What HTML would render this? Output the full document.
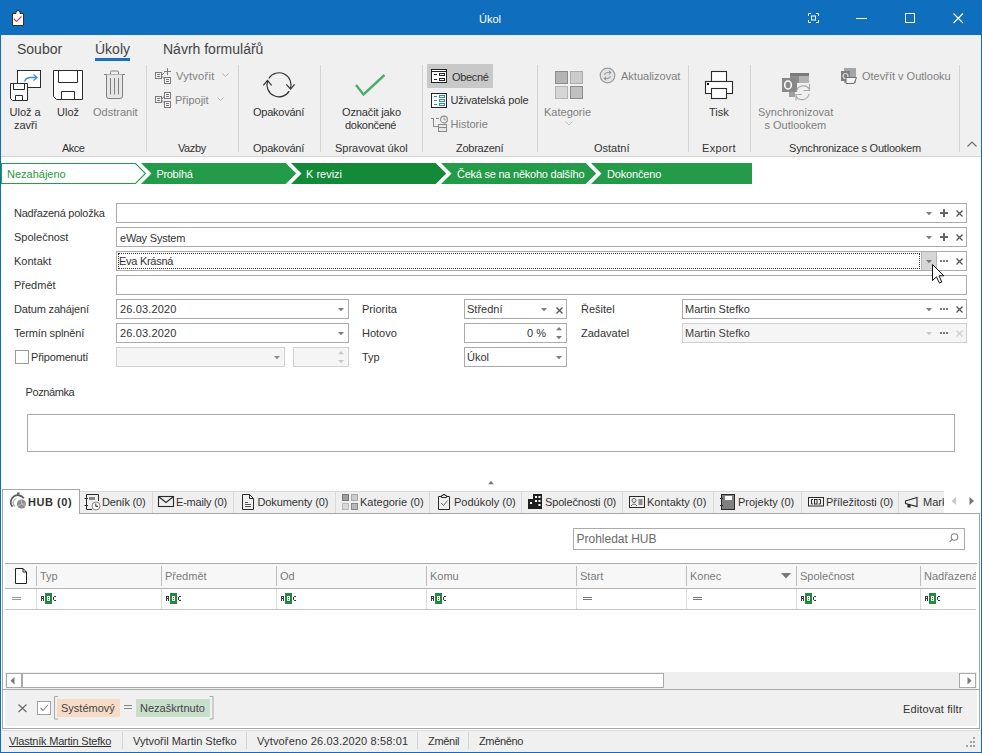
<!DOCTYPE html>
<html><head><meta charset="utf-8">
<style>
*{box-sizing:border-box;margin:0;padding:0}
html,body{width:982px;height:753px;overflow:hidden;background:#fff}
body{position:relative;font-family:"Liberation Sans",sans-serif;color:#333}
.a{position:absolute}
.t{position:absolute;white-space:nowrap;line-height:1}
.f11{font-size:11px}
.f12{font-size:12px}
.f14{font-size:14px}
.gr{color:#7f7f7f}
.vs{position:absolute;width:1px;background:#d4d4d4}
.fld{position:absolute;height:20px;border:1px solid #ababab;background:#fff}
.dis{background:#f5f5f5;border-color:#d0d0d0}
svg{position:absolute;overflow:visible}
</style></head><body>
<!-- window frame -->
<div class="a" style="left:0;top:0;width:982px;height:35px;background:#106ebe"></div>
<div class="a" style="left:0;top:0;width:1px;height:753px;background:#106ebe"></div>
<div class="a" style="left:981px;top:0;width:1px;height:753px;background:#106ebe"></div>
<div class="a" style="left:0;top:752px;width:982px;height:1px;background:#106ebe"></div>

<!-- title -->
<div class="t f11" style="left:479px;top:14px;color:#fff">Úkol</div>

<!-- ribbon -->
<div class="a" style="left:1px;top:35px;width:980px;height:121px;background:#f0f0f0"></div>
<div class="a" style="left:1px;top:156px;width:980px;height:1px;background:#d5d5d5"></div>
<div class="t f14" style="left:17px;top:42px;color:#444">Soubor</div>
<div class="t f14" style="left:95px;top:42px;color:#444">Úkoly</div>
<div class="a" style="left:95px;top:58px;width:35px;height:3px;background:#1a6fc0"></div>
<div class="t f14" style="left:163px;top:42px;color:#444">Návrh formulářů</div>


<!-- ribbon separators -->
<div class="vs" style="left:146px;top:65px;height:87px"></div>
<div class="vs" style="left:238px;top:65px;height:87px"></div>
<div class="vs" style="left:320px;top:65px;height:87px"></div>
<div class="vs" style="left:422px;top:65px;height:87px"></div>
<div class="vs" style="left:537px;top:65px;height:87px"></div>
<div class="vs" style="left:688px;top:65px;height:87px"></div>
<div class="vs" style="left:750px;top:65px;height:87px"></div>
<div class="vs" style="left:959px;top:65px;height:87px"></div>

<!-- group labels -->
<div class="t f11" style="left:62px;top:143px;letter-spacing:-0.5px">Akce</div>
<div class="t f11" style="left:178px;top:143px;letter-spacing:-0.4px">Vazby</div>
<div class="t f11" style="left:253px;top:143px;letter-spacing:-0.25px">Opakování</div>
<div class="t f11" style="left:335px;top:143px">Spravovat úkol</div>
<div class="t f11" style="left:456px;top:143px;letter-spacing:-0.25px">Zobrazení</div>
<div class="t f11" style="left:594px;top:143px">Ostatní</div>
<div class="t f11" style="left:702px;top:143px;letter-spacing:0.35px">Export</div>
<div class="t f11" style="left:789px;top:143px;letter-spacing:-0.2px">Synchronizace s Outlookem</div>
<svg style="left:966px;top:140px" width="12" height="8"><path d="M1.5 6.5 L6 2 L10.5 6.5" fill="none" stroke="#6a6a6a" stroke-width="1.1"/></svg>

<!-- Akce -->
<svg style="left:10px;top:70px" width="32" height="32">
 <rect x="7.5" y="0.5" width="23" height="17" fill="#fff" stroke="#2b2b2b"/>
 <path d="M14.5 11.5 Q16 7.5 21 7.5 L26.5 7.5" fill="none" stroke="#3a8fd6" stroke-width="1.3"/>
 <path d="M23.5 4.5 L27 7.5 L23.5 10.5" fill="none" stroke="#3a8fd6" stroke-width="1.3"/>
 <path d="M0.5 13.5 H17.5 V30.5 H2.5 L0.5 28.5 Z" fill="#fff" stroke="#2b2b2b"/>
 <path d="M3.5 13.5 V19.5 H14.5 V13.5" fill="none" stroke="#2b2b2b"/>
 <path d="M5.5 30.5 V25.5 H12.5 V30.5" fill="none" stroke="#2b2b2b"/>
</svg>
<svg style="left:53px;top:70px" width="31" height="31">
 <path d="M0.5 0.5 H29.5 V29.5 H3.5 L0.5 26.5 Z" fill="#fff" stroke="#2b2b2b"/>
 <path d="M5.5 0.5 V12.5 H24.5 V0.5" fill="none" stroke="#2b2b2b"/>
 <path d="M8.5 29.5 V21.5 H21.5 V29.5" fill="none" stroke="#2b2b2b"/>
</svg>
<svg style="left:104px;top:70px" width="22" height="30">
 <path d="M0 4.5 H21" stroke="#808080" stroke-width="1"/>
 <path d="M6.5 4.5 V1.5 Q6.5 1 7.5 1 H13.5 Q14.5 1 14.5 2 V4.5" fill="none" stroke="#808080"/>
 <path d="M2.5 4.5 V26 Q2.5 28.5 5 28.5 H16 Q18.5 28.5 18.5 26 V4.5" fill="#e6e6e6" stroke="#808080"/>
 <path d="M6.5 8 V24.5 M10.5 8 V24.5 M14.5 8 V24.5" stroke="#808080"/>
</svg>
<div class="t f11" style="left:9.5px;top:107px">Ulož a</div>
<div class="t f11" style="left:14px;top:120px">zavři</div>
<div class="t f11" style="left:57px;top:107px">Ulož</div>
<div class="t f11 gr" style="left:93px;top:107px">Odstranit</div>

<!-- Vazby -->
<svg style="left:155px;top:67px" width="18" height="18" fill="none" stroke="#7a7a7a">
 <rect x="0.5" y="5.5" width="6" height="6"/><path d="M2 7.5 H5 M2 9.5 H5"/>
 <rect x="9.5" y="10.5" width="6" height="6"/><path d="M11 12.5 H14 M11 14.5 H14"/>
 <path d="M6.5 8.5 L9.5 5.5 M12.5 1 V8 M9 4.5 H16 M6.5 9 L9.5 12"/>
</svg>
<div class="t f11 gr" style="left:176px;top:71px;letter-spacing:0.28px">Vytvořit</div>
<svg style="left:222px;top:73px" width="8" height="5"><path d="M0.5 0.5 L3.5 3.5 L6.5 0.5" fill="none" stroke="#b0b0b0"/></svg>
<svg style="left:155px;top:91px" width="18" height="18" fill="none" stroke="#7a7a7a">
 <rect x="0.5" y="5.5" width="6" height="6"/><path d="M2 7.5 H5 M2 9.5 H5"/>
 <rect x="9.5" y="1.5" width="6" height="6"/><path d="M11 3.5 H14 M11 5.5 H14"/>
 <rect x="9.5" y="10.5" width="6" height="6"/><path d="M11 12.5 H14 M11 14.5 H14"/>
 <path d="M6.5 8.5 L9.5 5 M6.5 9 L9.5 12"/>
</svg>
<div class="t f11 gr" style="left:175px;top:95px">Připojit</div>
<svg style="left:217px;top:97px" width="8" height="5"><path d="M0.5 0.5 L3.5 3.5 L6.5 0.5" fill="none" stroke="#b0b0b0"/></svg>

<!-- Opakovani -->
<svg style="left:260px;top:70px" width="38" height="30" fill="none" stroke="#333" stroke-width="1.2">
 <path d="M8.78 8.51 A12 12 0 0 1 30.22 19.06"/>
 <path d="M7.79 10.52 A12 12 0 0 0 29.19 21.14"/>
 <path d="M3.3 15.4 L7.5 10.4 L11.6 15.4"/>
 <path d="M26.3 14.4 L30.6 19.2 L34.6 14.4"/>
</svg>
<div class="t f11" style="left:253px;top:107px;letter-spacing:-0.25px">Opakování</div>

<!-- Spravovat -->
<svg style="left:355px;top:73px" width="32" height="24"><path d="M1 12 L8.5 21.5 L29.5 2" fill="none" stroke="#4cae6e" stroke-width="2.4"/></svg>
<div class="t f11" style="left:342px;top:107px;letter-spacing:-0.13px">Označit jako</div>
<div class="t f11" style="left:345px;top:120px;letter-spacing:-0.3px">dokončené</div>

<!-- Zobrazeni -->
<div class="a" style="left:427px;top:64px;width:66px;height:24px;background:#c8c8c8"></div>
<svg style="left:431px;top:69px" width="16" height="14">
 <rect x="0.5" y="0.5" width="15" height="13" fill="#fff" stroke="#222"/><rect x="1" y="2" width="14" height="1" fill="#222"/>
 <rect x="3" y="5" width="3" height="1" fill="#222"/><rect x="3" y="10" width="3" height="1" fill="#222"/>
 <rect x="8.5" y="4.5" width="5" height="2" fill="none" stroke="#222"/><rect x="8.5" y="9.5" width="5" height="2" fill="none" stroke="#222"/>
</svg>
<div class="t f11" style="left:452px;top:72px;letter-spacing:-0.35px">Obecné</div>
<svg style="left:431px;top:93px" width="16" height="15">
 <rect x="0.5" y="0.5" width="15" height="14" fill="#fff" stroke="#222"/>
 <rect x="3" y="3" width="3" height="1" fill="#2a8ad4"/><rect x="3" y="7" width="3" height="1" fill="#2a8ad4"/><rect x="3" y="11" width="3" height="1" fill="#2a8ad4"/>
 <rect x="8.5" y="2.5" width="5" height="2" fill="none" stroke="#2a8ad4"/><rect x="8.5" y="6.5" width="5" height="2" fill="none" stroke="#2a8ad4"/><rect x="8.5" y="10.5" width="5" height="2" fill="none" stroke="#2a8ad4"/>
</svg>
<div class="t f11" style="left:450.5px;top:95px;letter-spacing:-0.13px">Uživatelská pole</div>
<svg style="left:431px;top:116px" width="17" height="17" shape-rendering="crispEdges">
 <rect x="0" y="2" width="3" height="1" fill="#8a8a8a"/><rect x="5" y="2" width="3" height="1" fill="#8a8a8a"/>
 <rect x="2" y="3" width="1" height="8" fill="#8a8a8a"/><rect x="2" y="10" width="5" height="1" fill="#8a8a8a"/>
 <rect x="7.5" y="8.5" width="8" height="7" fill="#e6e6e6" stroke="#8a8a8a"/><rect x="8" y="11" width="7" height="1" fill="#8a8a8a"/>
</svg>
<svg style="left:439px;top:115px" width="10" height="10"><circle cx="5" cy="4.5" r="3.4" fill="#f0f0f0" stroke="#8a8a8a" stroke-width="1.1"/><path d="M5 2.5 V4.8 H6.8" fill="none" stroke="#8a8a8a" stroke-width="0.9"/></svg>
<div class="t f11 gr" style="left:450.5px;top:119px">Historie</div>

<!-- Ostatni -->
<svg style="left:555px;top:71px" width="29" height="29">
 <rect x="0.5" y="0.5" width="12" height="12" fill="#b4b4b4" stroke="#8c8c8c"/>
 <rect x="15.5" y="0.5" width="12" height="12" fill="#cccccc" stroke="#ababab"/>
 <rect x="0.5" y="15.5" width="12" height="12" fill="#d6d6d6" stroke="#b4b4b4"/>
 <rect x="15.5" y="15.5" width="12" height="12" fill="#c0c0c0" stroke="#8c8c8c"/>
</svg>
<div class="t f11 gr" style="left:544px;top:107px">Kategorie</div>
<svg style="left:565px;top:121px" width="9" height="6"><path d="M0.5 0.5 L4 4 L7.5 0.5" fill="none" stroke="#c0c0c0"/></svg>
<svg style="left:599px;top:67px" width="17" height="17" fill="none" stroke="#9a9a9a">
 <circle cx="8.5" cy="8.5" r="7.3" fill="#e4e4e4" stroke-width="1.2"/>
 <path d="M5.5 8 Q6 5.5 9 5.5 H11.5 M10 4 L11.8 5.5 L10 7.5 M11.5 9 Q11 11.5 8 11.5 H5.5 M7 10 L5.2 11.5 L7 13" stroke-width="1.1"/>
</svg>
<div class="t f11 gr" style="left:621px;top:71px">Aktualizovat</div>

<!-- Export -->
<svg style="left:705px;top:70px" width="30" height="30" fill="#fff" stroke="#2b2b2b" stroke-width="1.1">
 <rect x="6.5" y="1.5" width="15" height="10"/>
 <rect x="0.5" y="11.5" width="27" height="12"/>
 <rect x="6.5" y="18.5" width="15" height="10"/>
 <rect x="2" y="13" width="2" height="2" fill="#111" stroke="none"/>
</svg>
<div class="t f11" style="left:709px;top:107px">Tisk</div>

<!-- Outlook -->
<svg style="left:781px;top:72px" width="32" height="29">
 <rect x="9" y="1" width="19" height="3" fill="#7a7a7a"/>
 <rect x="9" y="4" width="9" height="7" fill="#8e8e8e"/>
 <rect x="18" y="4" width="10" height="7" fill="#b2b2b2"/>
 <rect x="8" y="11" width="6" height="14" fill="#a0a0a0"/>
 <rect x="1" y="6" width="15" height="14" fill="#888"/>
 <ellipse cx="7" cy="13" rx="3.3" ry="4" fill="none" stroke="#fff" stroke-width="1.6"/>
 <path d="M15.5 19.5 A7 7 0 0 1 28.5 17.5 M28.5 12 V18.5 H22.5 M28 22 A7 7 0 0 1 15 24 M15 28.5 V22.5 H21" fill="none" stroke="#aaa" stroke-width="1.2"/>
</svg>
<div class="t f11 gr" style="left:758px;top:107px">Synchronizovat</div>
<div class="t f11 gr" style="left:764.5px;top:120px">s Outlookem</div>
<svg style="left:841px;top:67px" width="17" height="18">
 <rect x="3" y="1" width="12" height="15" fill="#a6a6a6"/>
 <rect x="0" y="4" width="9" height="10" fill="#7e7e7e"/>
 <circle cx="4.5" cy="9" r="2.5" fill="none" stroke="#ddd" stroke-width="1.2"/>
 <path d="M5 10.5 H15.5 L13 16.5 H5 Z" fill="#f4f4f4" stroke="#6e6e6e"/>
</svg>
<div class="t f11 gr" style="left:862px;top:71px">Otevřít v Outlooku</div>


<!-- stage bar -->
<svg style="left:0;top:162px" width="760" height="24">
 <polygon points="1.5,1.5 135.5,1.5 145.5,11.5 135.5,21.5 1.5,21.5" fill="#fff" stroke="#22a047" stroke-width="1.1"/>
 <polygon points="141,1 285.7,1 296.2,11.5 285.7,22 141,22 151.5,11.5" fill="#239b48"/>
 <polygon points="291,1 435.7,1 446.2,11.5 435.7,22 291,22 301.5,11.5" fill="#138a38"/>
 <polygon points="441,1 585.7,1 596.2,11.5 585.7,22 441,22 451.5,11.5" fill="#239b48"/>
 <polygon points="591,1 752,1 752,22 591,22 601.5,11.5" fill="#239b48"/>
</svg>
<div class="t f11" style="left:7px;top:169px;color:#1f9a44">Nezahájeno</div>
<div class="t f11" style="left:156.5px;top:169px;color:#fff;letter-spacing:-0.35px">Probíhá</div>
<div class="t f11" style="left:306px;top:169px;color:#fff">K revizi</div>
<div class="t f11" style="left:457px;top:169px;color:#fff;letter-spacing:-0.24px">Čeká se na někoho dalšího</div>
<div class="t f11" style="left:607px;top:169px;color:#fff;letter-spacing:-0.17px">Dokončeno</div>

<!-- form labels -->
<div class="t f11" style="left:14px;top:208px;letter-spacing:-0.25px">Nadřazená položka</div>
<div class="t f11" style="left:14px;top:232px">Společnost</div>
<div class="t f11" style="left:14px;top:256px">Kontakt</div>
<div class="t f11" style="left:14px;top:280px">Předmět</div>
<div class="t f11" style="left:14px;top:304px;letter-spacing:-0.15px">Datum zahájení</div>
<div class="t f11" style="left:14px;top:328px;letter-spacing:-0.15px">Termín splnění</div>
<div class="a" style="left:15px;top:350px;width:14px;height:14px;border:1px solid #999;background:#fff"></div>
<div class="t f11" style="left:31px;top:352px;letter-spacing:-0.2px">Připomenutí</div>
<div class="t f11" style="left:362px;top:304px">Priorita</div>
<div class="t f11" style="left:362px;top:328px">Hotovo</div>
<div class="t f11" style="left:362px;top:352px">Typ</div>
<div class="t f11" style="left:581px;top:304px">Řešitel</div>
<div class="t f11" style="left:581px;top:328px">Zadavatel</div>

<!-- fields -->
<div class="fld" style="left:116px;top:203px;width:851px"></div>
<div class="fld" style="left:116px;top:227px;width:851px"></div>
<div class="fld" style="left:116px;top:251px;width:851px"></div>
<div class="fld" style="left:116px;top:275px;width:851px"></div>
<div class="fld" style="left:116px;top:299px;width:233px"></div>
<div class="fld" style="left:116px;top:323px;width:233px"></div>
<div class="fld dis" style="left:116px;top:347px;width:169px"></div>
<div class="fld dis" style="left:293px;top:347px;width:56px"></div>
<div class="fld" style="left:464px;top:299px;width:103px"></div>
<div class="fld" style="left:464px;top:323px;width:103px"></div>
<div class="fld" style="left:464px;top:347px;width:103px"></div>
<div class="fld" style="left:682px;top:299px;width:285px"></div>
<div class="fld dis" style="left:682px;top:323px;width:285px;border-color:#d0d0d0"></div>

<div class="t f11" style="left:120px;top:233px;letter-spacing:-0.2px">eWay System</div>
<div class="a" style="left:118px;top:253px;width:802px;height:16px;border:1px dotted #333"></div>
<div class="a" style="left:921px;top:252px;width:16px;height:18px;background:#d6d6d6;border-left:1px solid #b8b8b8;border-right:1px solid #b8b8b8"></div>
<div class="t f11" style="left:119px;top:256px;letter-spacing:-0.28px">Eva Krásná</div>
<div class="t f11" style="left:120px;top:304px;letter-spacing:0.15px">26.03.2020</div>
<div class="t f11" style="left:120px;top:328px;letter-spacing:0.15px">26.03.2020</div>
<div class="t f11" style="left:467px;top:304px">Střední</div>
<div class="t f11" style="left:527px;top:328px">0 %</div>
<div class="t f11" style="left:467px;top:352px">Úkol</div>
<div class="t f11" style="left:685px;top:304px">Martin Stefko</div>
<div class="t f11" style="left:685px;top:328px;color:#444">Martin Stefko</div>


<!-- field buttons -->
<svg style="left:926px;top:212px" width="6" height="4"><polygon points="0,0 6,0 3,3.2" fill="#7a7a7a"/></svg>
<svg style="left:940px;top:209px" width="9" height="9"><path d="M4 0 V8 M0 4 H8" stroke="#666" stroke-width="2"/></svg>
<svg style="left:956px;top:210px" width="8" height="8"><path d="M0.5 0.5 L6.5 6.5 M6.5 0.5 L0.5 6.5" stroke="#555" stroke-width="1.3"/></svg>
<svg style="left:926px;top:236px" width="6" height="4"><polygon points="0,0 6,0 3,3.2" fill="#7a7a7a"/></svg>
<svg style="left:940px;top:233px" width="9" height="9"><path d="M4 0 V8 M0 4 H8" stroke="#666" stroke-width="2"/></svg>
<svg style="left:956px;top:234px" width="8" height="8"><path d="M0.5 0.5 L6.5 6.5 M6.5 0.5 L0.5 6.5" stroke="#555" stroke-width="1.3"/></svg>
<svg style="left:926px;top:260px" width="6" height="4"><polygon points="0,0 6,0 3,3.2" fill="#7a7a7a"/></svg>
<svg style="left:940px;top:260px" width="10" height="3"><rect x="0" y="0" width="2" height="2" fill="#777"/><rect x="3" y="0" width="2" height="2" fill="#777"/><rect x="6" y="0" width="2" height="2" fill="#777"/></svg>
<svg style="left:956px;top:258px" width="8" height="8"><path d="M0.5 0.5 L6.5 6.5 M6.5 0.5 L0.5 6.5" stroke="#555" stroke-width="1.3"/></svg>
<svg style="left:338px;top:308px" width="6" height="4"><polygon points="0,0 6,0 3,3.2" fill="#7a7a7a"/></svg>
<svg style="left:338px;top:332px" width="6" height="4"><polygon points="0,0 6,0 3,3.2" fill="#7a7a7a"/></svg>
<svg style="left:274px;top:356px" width="6" height="4"><polygon points="0,0 6,0 3,3.2" fill="#8a8a8a"/></svg>
<svg style="left:338px;top:351px" width="6" height="4"><polygon points="0,3.2 6,3.2 3,0" fill="#c8c8c8"/></svg>
<svg style="left:338px;top:360px" width="6" height="4"><polygon points="0,0 6,0 3,3.2" fill="#c8c8c8"/></svg>
<svg style="left:541px;top:308px" width="6" height="4"><polygon points="0,0 6,0 3,3.2" fill="#7a7a7a"/></svg>
<svg style="left:556px;top:307px" width="8" height="8"><path d="M0.5 0.5 L6.5 6.5 M6.5 0.5 L0.5 6.5" stroke="#555" stroke-width="1.3"/></svg>
<svg style="left:556px;top:327px" width="6" height="4"><polygon points="0,3.2 6,3.2 3,0" fill="#7a7a7a"/></svg>
<svg style="left:556px;top:336px" width="6" height="4"><polygon points="0,0 6,0 3,3.2" fill="#7a7a7a"/></svg>
<svg style="left:556px;top:356px" width="6" height="4"><polygon points="0,0 6,0 3,3.2" fill="#7a7a7a"/></svg>
<svg style="left:926px;top:308px" width="6" height="4"><polygon points="0,0 6,0 3,3.2" fill="#7a7a7a"/></svg>
<svg style="left:940px;top:308px" width="10" height="3"><rect x="0" y="0" width="2" height="2" fill="#777"/><rect x="3" y="0" width="2" height="2" fill="#777"/><rect x="6" y="0" width="2" height="2" fill="#777"/></svg>
<svg style="left:956px;top:306px" width="8" height="8"><path d="M0.5 0.5 L6.5 6.5 M6.5 0.5 L0.5 6.5" stroke="#555" stroke-width="1.3"/></svg>
<svg style="left:926px;top:332px" width="6" height="4"><polygon points="0,0 6,0 3,3.2" fill="#c8c8c8"/></svg>
<svg style="left:940px;top:332px" width="10" height="3"><rect x="0" y="0" width="2" height="2" fill="#777"/><rect x="3" y="0" width="2" height="2" fill="#777"/><rect x="6" y="0" width="2" height="2" fill="#777"/></svg>
<svg style="left:956px;top:330px" width="8" height="8"><path d="M0.5 0.5 L6.5 6.5 M6.5 0.5 L0.5 6.5" stroke="#cfcfcf" stroke-width="1.3"/></svg>


<!-- poznamka -->
<div class="t f11" style="left:25.5px;top:387px;letter-spacing:-0.4px">Poznámka</div>
<div class="fld" style="left:27px;top:414px;width:928px;height:38px"></div>
<svg style="left:488px;top:481px" width="7" height="4"><polygon points="0,3.2 6,3.2 3,0" fill="#777"/></svg>

<!-- tab strip -->
<div class="a" style="left:79px;top:491px;width:865px;height:22px;background:#efefef;border-top:1px solid #d9d9d9"></div>
<div class="a" style="left:2px;top:489px;width:78px;height:25px;background:#fff;border:1px solid #a6a6a6;border-bottom:none"></div>
<div class="a" style="left:79px;top:513px;width:901px;height:1px;background:#a6a6a6"></div>
<div class="a" style="left:2px;top:513px;width:1px;height:177px;background:#a6a6a6"></div>
<div class="a" style="left:979px;top:513px;width:1px;height:177px;background:#a6a6a6"></div>
<div class="vs" style="left:152px;top:492px;height:21px;background:#d9d9d9"></div>
<div class="vs" style="left:233px;top:492px;height:21px;background:#d9d9d9"></div>
<div class="vs" style="left:335px;top:492px;height:21px;background:#d9d9d9"></div>
<div class="vs" style="left:429px;top:492px;height:21px;background:#d9d9d9"></div>
<div class="vs" style="left:521px;top:492px;height:21px;background:#d9d9d9"></div>
<div class="vs" style="left:622px;top:492px;height:21px;background:#d9d9d9"></div>
<div class="vs" style="left:713px;top:492px;height:21px;background:#d9d9d9"></div>
<div class="vs" style="left:801px;top:492px;height:21px;background:#d9d9d9"></div>
<div class="vs" style="left:898px;top:492px;height:21px;background:#d9d9d9"></div>

<svg style="left:8px;top:490px" width="20" height="20">
 <path d="M4 16.5 A6.8 6.8 0 1 1 15.8 8.3" fill="none" stroke="#5a5a5a" stroke-width="1.7"/>
 <rect x="9" y="2.5" width="2.5" height="2" fill="#5a5a5a"/>
 <path d="M3 16 H5" stroke="#5a5a5a" stroke-width="1.2"/>
 <path d="M7 16.5 A4.5 4.5 0 0 1 8.5 8.5" fill="none" stroke="#a8a8a8" stroke-width="1.2"/>
 <circle cx="13.5" cy="14" r="4.6" fill="#8e8e8e"/>
 <path d="M13.5 9.4 V14 L17.5 16.3 M13.5 14 L9.5 16.3 M13.5 14 H18" stroke="#c8c8c8" stroke-width="0.8" fill="none"/>
</svg>
<div class="t f11" style="left:28px;top:497px;font-weight:bold;color:#333;letter-spacing:0.55px">HUB (0)</div>

<svg style="left:84px;top:494px" width="17" height="17" fill="none" stroke="#2a2a2a">
 <path d="M2.5 0.5 H14.5 V7 M2.5 0.5 V15.5 H8 M0.5 4.5 H4 M0.5 11.5 H4"/>
 <rect x="5" y="3" width="6" height="3" fill="#888" stroke="none"/>
 <circle cx="12" cy="12" r="4" fill="#fff" stroke="#888"/><path d="M11.8 9.5 V12.3 H14" stroke="#222"/>
</svg>
<div class="t f11" style="left:102px;top:497px;letter-spacing:-0.2px">Deník (0)</div>

<svg style="left:158px;top:496px" width="17" height="12" fill="none" stroke="#2a2a2a" stroke-width="1.1">
 <rect x="0.5" y="0.5" width="15" height="10"/><path d="M0.8 0.8 L8 6.5 L15.2 0.8"/>
</svg>
<div class="t f11" style="left:176px;top:497px;letter-spacing:-0.2px">E-maily (0)</div>

<svg style="left:242px;top:494px" width="13" height="17" fill="none" stroke="#2a2a2a">
 <path d="M0.5 0.5 H7.5 L11.5 4.5 V15.5 H0.5 Z M7.5 0.5 V4.5 H11.5"/><path d="M3 8.5 H6 M3 10.5 H9 M3 12.5 H9" stroke="#555"/>
</svg>
<div class="t f11" style="left:257.5px;top:497px;letter-spacing:-0.1px">Dokumenty (0)</div>

<svg style="left:342px;top:494px" width="17" height="16">
 <rect x="0.5" y="0.5" width="6" height="6" fill="#a0a0a0" stroke="#777"/>
 <rect x="9.5" y="0.5" width="6" height="6" fill="#ccc" stroke="#aaa"/>
 <rect x="0.5" y="9.5" width="6" height="6" fill="#d8d8d8" stroke="#bbb"/>
 <rect x="9.5" y="9.5" width="6" height="6" fill="#b8b8b8" stroke="#888"/>
</svg>
<div class="t f11" style="left:360px;top:497px">Kategorie (0)</div>

<svg style="left:438px;top:494px" width="13" height="17" fill="none" stroke="#2a2a2a">
 <path d="M3.5 2.5 H0.5 V15.5 H11.5 V2.5 H8.5 M3.5 3.5 H8.5 V1.5 H7 V0.5 H5 V1.5 H3.5 Z"/><path d="M3 9 L5.5 11.5 L9.5 6.5" stroke="#666"/>
</svg>
<div class="t f11" style="left:454px;top:497px">Podúkoly (0)</div>

<svg style="left:528px;top:494px" width="15" height="15">
 <path d="M0 5 H5 V0 H14 V15 H0 Z" fill="#1e1e1e"/>
 <rect x="7" y="2" width="2" height="2" fill="#fff"/><rect x="10.5" y="2" width="2" height="2" fill="#fff"/>
 <rect x="7" y="6" width="2" height="2" fill="#fff"/><rect x="10.5" y="6" width="2" height="2" fill="#fff"/>
 <rect x="2" y="8" width="2" height="2" fill="#fff"/><rect x="10.5" y="10" width="2" height="2" fill="#fff"/>
</svg>
<div class="t f11" style="left:545px;top:497px;letter-spacing:-0.15px">Společnosti (0)</div>

<svg style="left:629px;top:496px" width="16" height="12" fill="none" stroke="#2a2a2a">
 <rect x="0.5" y="0.5" width="15" height="11"/><circle cx="5" cy="4.5" r="2" stroke="#666"/><path d="M2 10 Q5 6 8 10" stroke="#666"/><path d="M9.5 4 H13.5 M9.5 6 H13.5 M9.5 8 H13.5"/>
</svg>
<div class="t f11" style="left:647px;top:497px">Kontakty (0)</div>

<svg style="left:720px;top:494px" width="15" height="16">
 <rect x="1.5" y="0.5" width="13" height="15" fill="#808080" stroke="#2a2a2a"/>
 <rect x="5" y="2" width="7" height="4" fill="#fff"/>
 <path d="M0 4.5 H3 M0 11.5 H3" stroke="#2a2a2a"/>
</svg>
<div class="t f11" style="left:738px;top:497px">Projekty (0)</div>

<svg style="left:808px;top:497px" width="16" height="10" fill="none" stroke="#2a2a2a">
 <rect x="0.5" y="0.5" width="15" height="8.5"/><path d="M5 2.5 H3.5 V7 H5"/><rect x="6.5" y="2.5" width="2.5" height="4.5"/><path d="M10.5 2.5 H12.5 V7 H10.5"/>
</svg>
<div class="t f11" style="left:826px;top:497px">Příležitosti (0)</div>

<div class="a" style="left:899px;top:492px;width:45px;height:21px;overflow:hidden">
<svg style="left:6px;top:5px" width="13" height="11" fill="none" stroke="#2a2a2a" stroke-width="1.1">
 <path d="M0.5 4 L12 0.5 V9.5 L0.5 6.5 Z"/><path d="M3 7 V10 H5 V7.5" fill="#2a2a2a"/>
</svg>
<div class="t f11" style="left:24px;top:5px">Marketing</div>
</div>
<svg style="left:951px;top:497px" width="6" height="9"><polygon points="5,0 5,8 0.5,4" fill="#c8c8c8"/></svg>
<svg style="left:969px;top:497px" width="6" height="9"><polygon points="0.5,0 0.5,8 5,4" fill="#777"/></svg>

<!-- search -->
<div class="fld" style="left:573px;top:528px;width:392px;height:22px"></div>
<div class="t f12" style="left:576.5px;top:533px;color:#6a6a6a">Prohledat HUB</div>
<svg style="left:948px;top:532px" width="12" height="12" fill="none" stroke="#888" stroke-width="1.1"><circle cx="6.5" cy="5" r="3.3"/><path d="M4 7.5 L1.5 10"/></svg>

<!-- grid -->
<div class="a" style="left:5px;top:563px;width:972px;height:1px;background:#a9a9a9"></div>
<div class="a" style="left:5px;top:564px;width:972px;height:24px;background:#f7f7f7"></div>
<div class="a" style="left:5px;top:588px;width:972px;height:1px;background:#b5b5b5"></div>
<div class="a" style="left:5px;top:609px;width:972px;height:1px;background:#c4c4c4"></div>
<svg style="left:15px;top:568px" width="13" height="17" fill="#fff" stroke="#222"><path d="M0.5 0.5 H8 L11.5 4 V15.5 H0.5 Z"/><path d="M8 0.5 V4 H11.5" fill="none"/></svg>
<div class="t f11" style="left:12px;top:597px;width:9px;height:1px;background:#999"></div>
<div class="t f11" style="left:12px;top:599px;width:9px;height:1px;background:#999"></div>
<div class="a" style="left:36px;top:566px;width:1px;height:20px;background:#bdbdbd"></div>
<div class="a" style="left:36px;top:589px;width:1px;height:20px;background:#dcdcdc"></div>
<div class="t f11" style="left:40px;top:571px;color:#7b7b7b">Typ</div>
<svg style="left:41px;top:593px" width="16" height="11" shape-rendering="crispEdges"><rect x="0" y="3" width="3" height="1" fill="#3a3a3a"/><rect x="0" y="4" width="1" height="4" fill="#3a3a3a"/><rect x="2" y="4" width="1" height="4" fill="#3a3a3a"/><rect x="1" y="5" width="1" height="1" fill="#3a3a3a"/><rect x="4" y="0" width="7" height="11" fill="#1f8b3c"/><rect x="6" y="3" width="3" height="5" fill="#fff"/><rect x="7" y="4" width="1" height="1" fill="#1f8b3c"/><rect x="7" y="6" width="1" height="1" fill="#1f8b3c"/><rect x="13" y="3" width="2" height="1" fill="#3a3a3a"/><rect x="12" y="4" width="1" height="3" fill="#3a3a3a"/><rect x="13" y="7" width="2" height="1" fill="#3a3a3a"/></svg>
<div class="a" style="left:161px;top:566px;width:1px;height:20px;background:#bdbdbd"></div>
<div class="a" style="left:161px;top:589px;width:1px;height:20px;background:#dcdcdc"></div>
<div class="t f11" style="left:165px;top:571px;color:#7b7b7b">Předmět</div>
<svg style="left:166px;top:593px" width="16" height="11" shape-rendering="crispEdges"><rect x="0" y="3" width="3" height="1" fill="#3a3a3a"/><rect x="0" y="4" width="1" height="4" fill="#3a3a3a"/><rect x="2" y="4" width="1" height="4" fill="#3a3a3a"/><rect x="1" y="5" width="1" height="1" fill="#3a3a3a"/><rect x="4" y="0" width="7" height="11" fill="#1f8b3c"/><rect x="6" y="3" width="3" height="5" fill="#fff"/><rect x="7" y="4" width="1" height="1" fill="#1f8b3c"/><rect x="7" y="6" width="1" height="1" fill="#1f8b3c"/><rect x="13" y="3" width="2" height="1" fill="#3a3a3a"/><rect x="12" y="4" width="1" height="3" fill="#3a3a3a"/><rect x="13" y="7" width="2" height="1" fill="#3a3a3a"/></svg>
<div class="a" style="left:276px;top:566px;width:1px;height:20px;background:#bdbdbd"></div>
<div class="a" style="left:276px;top:589px;width:1px;height:20px;background:#dcdcdc"></div>
<div class="t f11" style="left:280px;top:571px;color:#7b7b7b">Od</div>
<svg style="left:281px;top:593px" width="16" height="11" shape-rendering="crispEdges"><rect x="0" y="3" width="3" height="1" fill="#3a3a3a"/><rect x="0" y="4" width="1" height="4" fill="#3a3a3a"/><rect x="2" y="4" width="1" height="4" fill="#3a3a3a"/><rect x="1" y="5" width="1" height="1" fill="#3a3a3a"/><rect x="4" y="0" width="7" height="11" fill="#1f8b3c"/><rect x="6" y="3" width="3" height="5" fill="#fff"/><rect x="7" y="4" width="1" height="1" fill="#1f8b3c"/><rect x="7" y="6" width="1" height="1" fill="#1f8b3c"/><rect x="13" y="3" width="2" height="1" fill="#3a3a3a"/><rect x="12" y="4" width="1" height="3" fill="#3a3a3a"/><rect x="13" y="7" width="2" height="1" fill="#3a3a3a"/></svg>
<div class="a" style="left:426px;top:566px;width:1px;height:20px;background:#bdbdbd"></div>
<div class="a" style="left:426px;top:589px;width:1px;height:20px;background:#dcdcdc"></div>
<div class="t f11" style="left:430px;top:571px;color:#7b7b7b">Komu</div>
<svg style="left:431px;top:593px" width="16" height="11" shape-rendering="crispEdges"><rect x="0" y="3" width="3" height="1" fill="#3a3a3a"/><rect x="0" y="4" width="1" height="4" fill="#3a3a3a"/><rect x="2" y="4" width="1" height="4" fill="#3a3a3a"/><rect x="1" y="5" width="1" height="1" fill="#3a3a3a"/><rect x="4" y="0" width="7" height="11" fill="#1f8b3c"/><rect x="6" y="3" width="3" height="5" fill="#fff"/><rect x="7" y="4" width="1" height="1" fill="#1f8b3c"/><rect x="7" y="6" width="1" height="1" fill="#1f8b3c"/><rect x="13" y="3" width="2" height="1" fill="#3a3a3a"/><rect x="12" y="4" width="1" height="3" fill="#3a3a3a"/><rect x="13" y="7" width="2" height="1" fill="#3a3a3a"/></svg>
<div class="a" style="left:576px;top:566px;width:1px;height:20px;background:#bdbdbd"></div>
<div class="a" style="left:576px;top:589px;width:1px;height:20px;background:#dcdcdc"></div>
<div class="t f11" style="left:580px;top:571px;color:#7b7b7b">Start</div>
<div class="a" style="left:583px;top:597px;width:9px;height:1px;background:#777"></div><div class="a" style="left:583px;top:599px;width:9px;height:1px;background:#777"></div>
<div class="a" style="left:686px;top:566px;width:1px;height:20px;background:#bdbdbd"></div>
<div class="a" style="left:686px;top:589px;width:1px;height:20px;background:#dcdcdc"></div>
<div class="t f11" style="left:690px;top:571px;color:#7b7b7b">Konec</div>
<div class="a" style="left:693px;top:597px;width:9px;height:1px;background:#777"></div><div class="a" style="left:693px;top:599px;width:9px;height:1px;background:#777"></div>
<div class="a" style="left:796px;top:566px;width:1px;height:20px;background:#bdbdbd"></div>
<div class="a" style="left:796px;top:589px;width:1px;height:20px;background:#dcdcdc"></div>
<div class="t f11" style="left:800px;top:571px;color:#7b7b7b">Společnost</div>
<svg style="left:801px;top:593px" width="16" height="11" shape-rendering="crispEdges"><rect x="0" y="3" width="3" height="1" fill="#3a3a3a"/><rect x="0" y="4" width="1" height="4" fill="#3a3a3a"/><rect x="2" y="4" width="1" height="4" fill="#3a3a3a"/><rect x="1" y="5" width="1" height="1" fill="#3a3a3a"/><rect x="4" y="0" width="7" height="11" fill="#1f8b3c"/><rect x="6" y="3" width="3" height="5" fill="#fff"/><rect x="7" y="4" width="1" height="1" fill="#1f8b3c"/><rect x="7" y="6" width="1" height="1" fill="#1f8b3c"/><rect x="13" y="3" width="2" height="1" fill="#3a3a3a"/><rect x="12" y="4" width="1" height="3" fill="#3a3a3a"/><rect x="13" y="7" width="2" height="1" fill="#3a3a3a"/></svg>
<div class="a" style="left:920px;top:566px;width:1px;height:20px;background:#bdbdbd"></div>
<div class="a" style="left:920px;top:589px;width:1px;height:20px;background:#dcdcdc"></div>
<div class="t f11" style="left:924px;top:571px;color:#7b7b7b">Nadřazená</div>
<svg style="left:925px;top:593px" width="16" height="11" shape-rendering="crispEdges"><rect x="0" y="3" width="3" height="1" fill="#3a3a3a"/><rect x="0" y="4" width="1" height="4" fill="#3a3a3a"/><rect x="2" y="4" width="1" height="4" fill="#3a3a3a"/><rect x="1" y="5" width="1" height="1" fill="#3a3a3a"/><rect x="4" y="0" width="7" height="11" fill="#1f8b3c"/><rect x="6" y="3" width="3" height="5" fill="#fff"/><rect x="7" y="4" width="1" height="1" fill="#1f8b3c"/><rect x="7" y="6" width="1" height="1" fill="#1f8b3c"/><rect x="13" y="3" width="2" height="1" fill="#3a3a3a"/><rect x="12" y="4" width="1" height="3" fill="#3a3a3a"/><rect x="13" y="7" width="2" height="1" fill="#3a3a3a"/></svg>
<div class="a" style="left:976px;top:564px;width:2px;height:46px;background:#fff"></div>
<svg style="left:781px;top:573px" width="11" height="6"><polygon points="0,0 10,0 5,5.5" fill="#777"/></svg>
<!-- h scrollbar -->
<div class="a" style="left:5px;top:672px;width:972px;height:17px;background:#efefef"></div>
<div class="a" style="left:6px;top:673px;width:16px;height:15px;background:#fff;border:1px solid #a9a9a9"></div>
<svg style="left:10px;top:677px" width="6" height="8"><polygon points="4.5,0 4.5,7.5 0.5,3.75" fill="#777"/></svg>
<div class="a" style="left:22px;top:673px;width:642px;height:15px;background:#fff;border:1px solid #a9a9a9"></div>
<div class="a" style="left:959px;top:673px;width:17px;height:15px;background:#fff;border:1px solid #a9a9a9"></div>
<svg style="left:967px;top:677px" width="6" height="8"><polygon points="0.5,0 0.5,7.5 4.5,3.75" fill="#777"/></svg>
<div class="a" style="left:3px;top:689px;width:976px;height:1px;background:#a9a9a9"></div>

<!-- filter panel -->
<div class="a" style="left:3px;top:690px;width:976px;height:38px;background:#f0f0f0;border:2px solid #fff;border-top:none"></div>
<div class="a" style="left:2px;top:690px;width:1px;height:39px;background:#a6a6a6"></div>
<div class="a" style="left:2px;top:728px;width:978px;height:1px;background:#a6a6a6"></div>
<div class="a" style="left:979px;top:690px;width:1px;height:39px;background:#a6a6a6"></div>
<svg style="left:18px;top:704px" width="10" height="9"><path d="M0.5 0.5 L8.5 8 M8.5 0.5 L0.5 8" stroke="#666" stroke-width="1.1"/></svg>
<div class="a" style="left:37px;top:701px;width:14px;height:14px;border:1px solid #a0a0a0;background:#fff"></div>
<svg style="left:40px;top:704px" width="9" height="8"><path d="M0.5 4 L3 6.5 L8 1" fill="none" stroke="#888" stroke-width="1.1"/></svg>
<svg style="left:54px;top:696px" width="5" height="24"><path d="M4 0.5 H0.5 V23 H4" fill="none" stroke="#a8a8a8"/></svg>
<div class="a" style="left:57px;top:699px;width:63px;height:18px;background:#f6dcc6"></div>
<div class="t f11" style="left:61px;top:703px;color:#444">Systémový</div>
<div class="a" style="left:124px;top:705px;width:8px;height:1px;background:#888"></div>
<div class="a" style="left:124px;top:708px;width:8px;height:1px;background:#888"></div>
<div class="a" style="left:136px;top:699px;width:74px;height:18px;background:#c8dfcc"></div>
<div class="t f11" style="left:140px;top:703px;color:#444">Nezaškrtnuto</div>
<svg style="left:209px;top:696px" width="5" height="24"><path d="M0.5 0.5 H4 V23 H0.5" fill="none" stroke="#a8a8a8"/></svg>
<div class="t f11" style="left:903px;top:704px;letter-spacing:0.15px">Editovat filtr</div>

<!-- status bar -->
<div class="a" style="left:1px;top:730px;width:980px;height:1px;background:#dcdcdc"></div>
<div class="a" style="left:1px;top:731px;width:980px;height:21px;background:#f0f0f0"></div>
<div class="t f11" style="left:9px;top:736px;text-decoration:underline;letter-spacing:-0.22px">Vlastník Martin Stefko</div>
<div class="vs" style="left:122px;top:732px;height:17px"></div>
<div class="t f11" style="left:133px;top:736px">Vytvořil Martin Stefko</div>
<div class="vs" style="left:246px;top:732px;height:17px"></div>
<div class="t f11" style="left:257px;top:736px;letter-spacing:0.15px">Vytvořeno 26.03.2020 8:58:01</div>
<div class="vs" style="left:417px;top:732px;height:17px"></div>
<div class="t f11" style="left:428px;top:736px;letter-spacing:-0.3px">Změnil</div>
<div class="vs" style="left:468px;top:732px;height:17px"></div>
<div class="t f11" style="left:479px;top:736px;letter-spacing:-0.35px">Změněno</div>
<svg style="left:966px;top:737px" width="12" height="12" fill="#a0a0a0"><rect x="7" y="0" width="2" height="2"/><rect x="4" y="4" width="2" height="2"/><rect x="7" y="4" width="2" height="2"/><rect x="0" y="8" width="2" height="2"/><rect x="4" y="8" width="2" height="2"/><rect x="7" y="8" width="2" height="2"/></svg>

<!-- title bar controls & icon -->
<svg style="left:12px;top:10px" width="13" height="17">
 <path d="M0.5 3.5 H4 V1.5 H5 V0.5 H7 V1.5 H8 V3.5 H11.5 V15.5 H0.5 Z" fill="#fff" stroke="#3a2a2a"/>
 <path d="M2 9 L4.5 11.5 L9.5 6.5" fill="none" stroke="#d84040" stroke-width="1.1"/>
</svg>
<svg style="left:808px;top:13px" width="12" height="11" fill="none" stroke="#fff">
 <path d="M0.5 3 V0.5 H3 M8 0.5 H10.5 V3 M10.5 7 V9.5 H8 M3 9.5 H0.5 V7"/><rect x="3.5" y="3" width="4" height="4"/>
</svg>
<div class="a" style="left:856px;top:18px;width:11px;height:1px;background:#fff"></div>
<div class="a" style="left:905px;top:13px;width:10px;height:10px;border:1px solid #fff"></div>
<svg style="left:953px;top:13px" width="11" height="11"><path d="M0.5 0.5 L10 10 M10 0.5 L0.5 10" stroke="#fff" stroke-width="1.1"/></svg>

<!-- cursor -->
<svg style="left:932px;top:264px" width="14" height="21">
 <path d="M0.5 0.5 V16.5 L4.5 12.8 L7.4 19 L9.8 18 L7 11.8 H11.8 Z" fill="#fff" stroke="#111" stroke-width="1" stroke-linejoin="miter"/>
</svg>

</body></html>
